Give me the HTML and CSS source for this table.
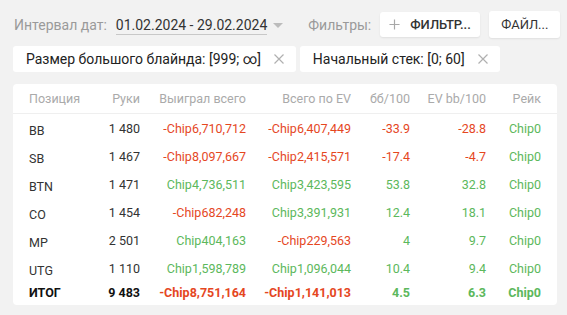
FILE: index.html
```html
<!DOCTYPE html>
<html lang="ru">
<head>
<meta charset="utf-8">
<title>Статистика</title>
<link rel="stylesheet" href="styles.css">
</head>
<body>
<div class="page">
  <div class="toolbar">
    <span class="label">Интервал дат:</span>
    <span class="date">01.02.2024 - 29.02.2024</span>
    <span class="caret"></span>
    <span class="label filters-label">Фильтры:</span>
    <button class="btn btn-add"><svg class="plus" viewBox="0 0 12 12" width="12" height="12"><path d="M6 0.5V11.5M0.5 6H11.5" stroke="#a8a8a8" stroke-width="1.3" fill="none"/></svg><span>ФИЛЬТР...</span></button>
    <button class="btn btn-file">ФАЙЛ...</button>
  </div>
  <div class="chips">
    <div class="chip"><span>Размер большого блайнда: [999; ∞]</span><svg class="x" viewBox="0 0 10 10" width="10" height="10"><path d="M0.5 0.5L9.5 9.5M9.5 0.5L0.5 9.5" stroke="#b0b0b0" stroke-width="1.2" fill="none"/></svg></div>
    <div class="chip"><span>Начальный стек: [0; 60]</span><svg class="x" viewBox="0 0 10 10" width="10" height="10"><path d="M0.5 0.5L9.5 9.5M9.5 0.5L0.5 9.5" stroke="#b0b0b0" stroke-width="1.2" fill="none"/></svg></div>
  </div>
  <div class="card">
    <table class="stats">
      <colgroup>
        <col class="c1"><col class="c2"><col class="c3"><col class="c4"><col class="c5"><col class="c6"><col class="c7">
      </colgroup>
      <thead>
        <tr><th class="pos">Позиция</th><th>Руки</th><th>Выиграл всего</th><th>Всего по EV</th><th>бб/100</th><th>EV bb/100</th><th class="last">Рейк</th></tr>
      </thead>
      <tbody>
        <tr><td class="pos">BB</td><td>1 480</td><td class="neg">-Chip6,710,712</td><td class="neg">-Chip6,407,449</td><td class="neg">-33.9</td><td class="neg">-28.8</td><td class="pos-v last">Chip0</td></tr>
        <tr><td class="pos">SB</td><td>1 467</td><td class="neg">-Chip8,097,667</td><td class="neg">-Chip2,415,571</td><td class="neg">-17.4</td><td class="neg">-4.7</td><td class="pos-v last">Chip0</td></tr>
        <tr><td class="pos">BTN</td><td>1 471</td><td class="pos-v">Chip4,736,511</td><td class="pos-v">Chip3,423,595</td><td class="pos-v">53.8</td><td class="pos-v">32.8</td><td class="pos-v last">Chip0</td></tr>
        <tr><td class="pos">CO</td><td>1 454</td><td class="neg">-Chip682,248</td><td class="pos-v">Chip3,391,931</td><td class="pos-v">12.4</td><td class="pos-v">18.1</td><td class="pos-v last">Chip0</td></tr>
        <tr><td class="pos">MP</td><td>2 501</td><td class="pos-v">Chip404,163</td><td class="neg">-Chip229,563</td><td class="pos-v">4</td><td class="pos-v">9.7</td><td class="pos-v last">Chip0</td></tr>
        <tr><td class="pos">UTG</td><td>1 110</td><td class="pos-v">Chip1,598,789</td><td class="pos-v">Chip1,096,044</td><td class="pos-v">10.4</td><td class="pos-v">9.4</td><td class="pos-v last">Chip0</td></tr>
        <tr class="total"><td class="pos">ИТОГ</td><td>9 483</td><td class="neg">-Chip8,751,164</td><td class="neg">-Chip1,141,013</td><td class="pos-v">4.5</td><td class="pos-v">6.3</td><td class="pos-v last">Chip0</td></tr>
      </tbody>
    </table>
  </div>
</div>
</body>
</html>
```
FILE: styles.css
```css
html, body {
  margin: 0;
  padding: 0;
  background: #f2f2f2;
  font-family: Roboto, "Liberation Sans", Arial, sans-serif;
  color: #333;
}
.page {
  width: 567px;
  height: 315px;
  overflow: hidden;
}
.toolbar {
  display: flex;
  align-items: center;
  height: 27px;
  padding: 11px 0 0 14px;
  font-size: 14px;
}
.label {
  color: #9a9a9a;
}
.date {
  margin-left: 9px;
  color: #333;
  border-bottom: 1px solid #c8c8c8;
  line-height: 17px;
  margin-top: 2px;
}
.caret {
  margin-left: 6px;
  width: 0;
  height: 0;
  border-left: 5px solid transparent;
  border-right: 5px solid transparent;
  border-top: 5px solid #bcbcbc;
  margin-top: 2px;
}
.filters-label {
  margin-left: 25px;
}
.btn {
  display: flex;
  align-items: center;
  background: #fff;
  border: none;
  border-radius: 3px;
  box-shadow: 0 1px 2px rgba(0,0,0,0.08);
  font-family: Roboto, "Liberation Sans", Arial, sans-serif;
  font-size: 13px;
  font-weight: 500;
  color: #333;
  padding: 0;
  cursor: pointer;
}
.btn-add {
  margin-left: 9px;
  height: 25px;
  width: 100px;
  padding-left: 9px;
}
.btn-add .plus {
  margin-right: 10px;
  width: 11px;
  height: 11px;
}
.btn-file {
  margin-left: 9px;
  height: 27px;
  width: 71px;
  justify-content: center;
  font-weight: 400;
}
.chips {
  display: flex;
  gap: 4px;
  padding: 8px 0 0 13px;
}
.chip {
  display: flex;
  align-items: center;
  height: 26px;
  background: #fff;
  border-radius: 3px;
  font-size: 14px;
  color: #222;
  padding: 0 12px 0 13px;
}
.chip .x {
  margin-left: 13px;
}
.card {
  margin: 12px 0 0 13px;
  width: 544px;
  background: #fff;
  border-radius: 4px;
  padding-bottom: 3px;
}
.stats {
  width: 544px;
  border-collapse: collapse;
  table-layout: fixed;
  font-size: 12.5px;
}
.c1 { width: 76px; }
.c2 { width: 51px; }
.c3 { width: 106px; }
.c4 { width: 105px; }
.c5 { width: 59px; }
.c6 { width: 76px; }
.c7 { width: 71px; }
.stats th {
  height: 29px;
  font-weight: 400;
  color: #aaa;
  text-align: right;
  padding: 0;
  border-bottom: 1px solid #efefef;
  vertical-align: middle;
  white-space: nowrap;
}
.stats td {
  height: 28px;
  text-align: right;
  padding: 0;
  vertical-align: middle;
  white-space: nowrap;
  color: #333;
}
.stats .pos {
  text-align: left;
  padding-left: 16px;
}
.stats td.pos {
  padding-top: 5px;
  height: 23px;
}
.stats .last {
  padding-right: 16px;
}
.stats td.neg { color: #e5471f; }
.stats td.pos-v { color: #5cb85c; }
.stats tr.total td {
  height: 20px;
  font-weight: 700;
  color: #111;
}
.stats tr.total td.pos {
  padding-top: 0;
  height: 20px;
}
.stats tr.total td.neg { color: #e5471f; }
.stats tr.total td.pos-v { color: #5cb85c; }
```
